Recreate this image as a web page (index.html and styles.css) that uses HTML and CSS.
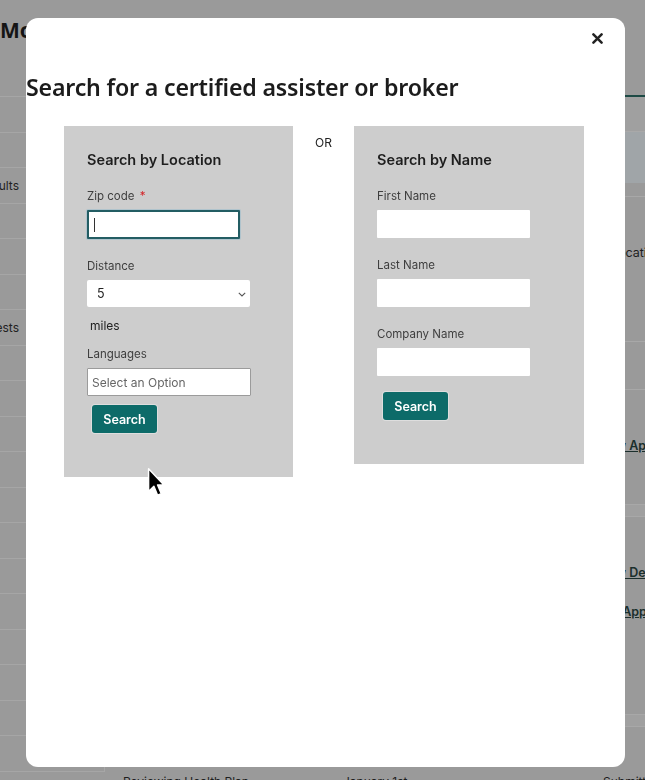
FILE: index.html
```html
<!DOCTYPE html>
<html lang="en">

<head>
  <meta charset="UTF-8">
  <meta name="viewport" content="width=device-width, initial-scale=1.0">
  <title>Find Assistance</title>
  <link rel="stylesheet" href="styles.css">
</head>

<body>

  <div class="page">
    <aside class="side">
      <div class="side-title">Monitor</div>
      <div class="side-item"></div>
      <div class="side-item"></div>
      <div class="side-item"><span>Search Results</span></div>
      <div class="side-item"></div>
      <div class="side-item"></div>
      <div class="side-item"></div>
      <div class="side-item"><span>Pending Requests</span></div>
      <div class="side-item"></div>
      <div class="side-item"></div>
      <div class="side-item"></div>
      <div class="side-item"></div>
      <div class="side-item"></div>
      <div class="side-item"></div>
      <div class="side-item"></div>
      <div class="side-item"></div>
      <div class="side-item"></div>
      <div class="side-item"></div>
      <div class="side-item"></div>
      <div class="side-item"></div>
    </aside>

    <main class="main">
      <div class="main-tabs"></div>
      <div class="band-top"></div>
      <div class="band"></div>
      <div class="row row-gap"></div>
      <div class="row row-location"><span class="cell cell-loc">Set Location</span></div>
      <div class="row row-small"></div>
      <div class="row row-app"><a class="cell link">View App</a></div>
      <div class="row row-thin"></div>
      <div class="row row-details">
        <a class="cell link">View Details</a>
        <a class="cell link">Edit App</a>
      </div>
      <div class="row row-thin"></div>
      <div class="row row-last">
        <span class="col-a">Reviewing Health Plan</span>
        <span class="col-b">January 1st</span>
        <span class="col-c">Submitted</span>
      </div>
    </main>
  </div>

  <div class="modal">
    <button class="close" aria-label="Close">
      <svg width="11" height="11" viewBox="0 0 11 11">
        <path d="M1.4 1.4 L9.6 9.6 M9.6 1.4 L1.4 9.6" stroke="#222" stroke-width="2.5" stroke-linecap="round" />
      </svg>
    </button>

    <h1 class="modal-title">Search for a certified assister or broker</h1>

    <div class="panels">
      <div class="panel">
        <h2 class="panel-title">Search by Location</h2>

        <div class="field">
          <label>Zip code <span class="req">*</span></label>
          <div class="focus-wrap">
            <input type="text" class="input zip">
            <span class="caret"></span>
          </div>
        </div>

        <div class="field">
          <label>Distance</label>
          <div class="select-wrap">
            <select class="select">
              <option>5</option>
              <option>10</option>
              <option>25</option>
            </select>
            <svg class="chevron" width="8" height="5" viewBox="0 0 8 5">
              <path d="M0.8 0.8 L4 4 L7.2 0.8" fill="none" stroke="#555" stroke-width="1.1" />
            </svg>
          </div>
        </div>
        <div class="miles">miles</div>

        <div class="field field-tight">
          <label>Languages</label>
          <input type="text" class="input lang" placeholder="Select an Option">
        </div>

        <button class="search-btn">Search</button>
      </div>

      <div class="or">OR</div>

      <div class="panel panel-name">
        <h2 class="panel-title">Search by Name</h2>

        <div class="field">
          <label>First Name</label>
          <input type="text" class="input">
        </div>
        <div class="field">
          <label>Last Name</label>
          <input type="text" class="input">
        </div>
        <div class="field">
          <label>Company Name</label>
          <input type="text" class="input">
        </div>

        <button class="search-btn search-btn-name">Search</button>
      </div>
    </div>

    <svg class="pointer" width="18" height="31" viewBox="0 0 17 29">
      <path d="M1.5 1.5 L1.5 23 L6.5 18 L10 26.5 L13.5 25 L10 16.8 L16 16.8 Z" fill="#000" stroke="#fff" stroke-width="1.4" stroke-linejoin="round" />
    </svg>
  </div>

</body>

</html>
```

FILE: styles.css
```css
* {
  box-sizing: border-box;
}

body {
  margin: 0;
  padding: 0;
  height: 100vh;
  overflow: hidden;
  background: #9a9a9a;
  font-family: Inter, "Liberation Sans", sans-serif;
  color: #1b1b1b;
}

/* dimmed page behind the dialog */

.page {
  display: flex;
  height: 100vh;
}

.side {
  width: 105px;
  flex-shrink: 0;
}

.side-title {
  height: 97px;
  padding-top: 18px;
  font-family: "Noto Sans", sans-serif;
  font-size: 21px;
  font-weight: 700;
  line-height: 24px;
  color: #151515;
  white-space: nowrap;
  border-bottom: 1px solid #a6a6a6;
}

.side-item {
  height: 35.5px;
  display: flex;
  align-items: center;
  border-bottom: 1px solid #a6a6a6;
  border-right: 1px solid #a7a7a7;
  font-size: 12px;
  color: #222;
}

.side-item span {
  width: 19px;
  direction: rtl;
  white-space: nowrap;
}

.main {
  flex: 1;
  display: flex;
  flex-direction: column;
}

.main-tabs {
  height: 97px;
  flex-shrink: 0;
  border-bottom: 2px solid #1d4a45;
}

.band-top {
  height: 35px;
  flex-shrink: 0;
  background: #a0a0a0;
  border-bottom: 1px solid #a9a9a9;
}

.band {
  height: 51px;
  flex-shrink: 0;
  background: #a0a5a8;
}

.row {
  display: flex;
  flex-shrink: 0;
  align-items: flex-start;
  border-bottom: 1px solid #a8a8a8;
  font-size: 12.5px;
  line-height: 15px;
  color: #1e1e1e;
}

.row-gap {
  height: 14px;
}

.row-location {
  height: 145px;
  padding-top: 48px;
}

.row-small {
  height: 48px;
}

.row-app {
  height: 115px;
  padding-top: 48px;
}

.row-thin {
  height: 12px;
  background: #a0a0a0;
}

.row-details {
  height: 198px;
  flex-direction: column;
  gap: 24px;
  padding-top: 48px;
}

.row-last {
  flex: 1;
  padding: 47px 0 0 18px;
  border-bottom: none;
  font-size: 12px;
}

.cell {
  margin-left: 491px;
  white-space: nowrap;
}

.cell-loc {
  margin-left: 483px;
}

.link {
  text-decoration: underline;
  font-weight: 600;
  color: #1b2f2c;
}

.col-a {
  width: 220px;
}

.col-b {
  width: 260px;
}

/* dialog */

.modal {
  position: fixed;
  left: 26px;
  top: 18px;
  width: 599px;
  height: 749px;
  padding-top: 55px;
  background: #fff;
  border-radius: 12px;
}

.close {
  position: absolute;
  top: 14px;
  right: 21px;
  width: 13px;
  height: 13px;
  padding: 0;
  border: none;
  background: none;
  display: flex;
  align-items: center;
  justify-content: center;
  cursor: pointer;
}

.modal-title {
  margin: 0;
  font-family: "Noto Sans", sans-serif;
  font-size: 23.2px;
  font-weight: 600;
  line-height: 28px;
  letter-spacing: -0.2px;
  color: #1c1c1c;
}

.panels {
  display: flex;
  align-items: flex-start;
  margin-top: 25px;
  padding-left: 38px;
}

.panel {
  width: 229px;
  padding: 25px 23px 44px;
  background: #cdcdcd;
}

.panel-name {
  width: 230px;
}

.or {
  width: 61px;
  padding-top: 10px;
  text-align: center;
  font-size: 12px;
  line-height: 14px;
  color: #222;
}

.panel-title {
  margin: 0;
  font-size: 14.5px;
  font-weight: 600;
  line-height: 18px;
  color: #1e1e1e;
}

.field {
  margin-top: 20px;
  display: flex;
  flex-direction: column;
  align-items: flex-start;
}

.field-tight {
  margin-top: 14px;
}

.field label {
  margin-bottom: 7px;
  font-size: 11.5px;
  line-height: 14px;
  color: #3f3f3f;
}

.req {
  color: #d4262a;
  margin-left: 2px;
}

.input {
  width: 153px;
  height: 28px;
  padding: 0 5px;
  border: none;
  border-radius: 1px;
  background: #fff;
  font-family: inherit;
  font-size: 12px;
  outline: none;
}

.focus-wrap {
  position: relative;
}

.input.zip {
  height: 29px;
  border: 2px solid #235d63;
  box-shadow: 0 0 0 1px rgba(140, 185, 205, 0.45);
}

.caret {
  position: absolute;
  left: 7px;
  top: 8px;
  width: 1px;
  height: 14px;
  background: #333;
}

.select-wrap {
  position: relative;
}

.select {
  width: 163px;
  height: 27px;
  padding: 0 10px;
  border: none;
  border-radius: 2px;
  background: #fff;
  font-family: inherit;
  font-size: 12.5px;
  color: #222;
  -webkit-appearance: none;
  appearance: none;
}

.chevron {
  position: absolute;
  right: 4px;
  top: 12px;
  pointer-events: none;
}

.miles {
  margin-top: 12px;
  padding-left: 3px;
  font-size: 12px;
  line-height: 14px;
  color: #222;
}

.input.lang {
  width: 164px;
  border: 1px solid #9b9b9b;
  padding: 0 4px;
}

.input.lang::placeholder {
  color: #666;
}

.search-btn {
  display: block;
  width: 65px;
  height: 28px;
  margin: 9px 0 0 5px;
  padding: 0;
  border: none;
  border-radius: 3px;
  background: #0d6b69;
  color: #fff;
  font-family: inherit;
  font-size: 12.5px;
  font-weight: 600;
  box-shadow: 0 0 0 1px rgba(255, 255, 255, 0.35);
  cursor: pointer;
}

.search-btn-name {
  margin: 16px 0 0 6px;
}

.pointer {
  position: absolute;
  left: 121px;
  top: 449px;
}
```
